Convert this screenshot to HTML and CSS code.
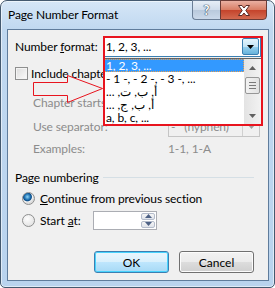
FILE: index.html
```html
<!DOCTYPE html>
<html lang="en">
<head>
    <meta charset="UTF-8">
    <title>Page Number Format</title>
    <link rel="stylesheet" href="styles.css">
</head>
<body>
    <div class="window">
        <div class="titlebar">
            <span class="title">Page Number Format</span>
            <div class="caption-buttons">
                <div class="cap-btn help">?</div>
                <div class="cap-btn close">
                    <svg width="14" height="11" viewBox="0 0 14 11">
                        <path d="M1.5 0.5h3.5l2 2.5 2-2.5h3.5l-3.7 5 3.7 5h-3.5l-2-2.5-2 2.5h-3.5l3.7-5z" fill="#fff" stroke="#5a2a25" stroke-width="1"/>
                    </svg>
                </div>
            </div>
        </div>

        <div class="client">
            <!-- Number format -->
            <div class="row row-format">
                <label class="lbl">Number <u>f</u>ormat:</label>
                <div class="combo combo-format">
                    <span class="combo-text">1, 2, 3, ...</span>
                    <span class="combo-btn pressed">
                        <svg width="7" height="4" viewBox="0 0 7 4"><path d="M0 0h7l-3.5 4z" fill="#000"/></svg>
                    </span>
                </div>
            </div>

            <div class="row row-check">
                <span class="checkbox"></span>
                <span class="check-text">Include chapter number</span>
            </div>

            <!-- Chapter numbering (disabled) -->
            <div class="chapter-grid">
                <span class="dim cut">Chapter starts with style</span>
                <div class="combo combo-off">
                    <span class="combo-text"></span>
                    <span class="combo-btn"><svg width="7" height="4" viewBox="0 0 7 4"><path d="M0 0h7l-3.5 4z" fill="#a0a0a0"/></svg></span>
                </div>
                <span class="dim">Use separator:</span>
                <div class="combo combo-off">
                    <span class="combo-text">-&nbsp;&nbsp;&nbsp;(hyphen)</span>
                    <span class="combo-btn"><svg width="7" height="4" viewBox="0 0 7 4"><path d="M0 0h7l-3.5 4z" fill="#a0a0a0"/></svg></span>
                </div>
                <span class="dim">Examples:</span>
                <span class="dim">1-1, 1-A</span>
            </div>

            <!-- Page numbering -->
            <div class="group-head">
                <span>Page numbering</span>
                <span class="group-line"></span>
            </div>
            <div class="row radio-row">
                <span class="radio checked"></span>
                <span><u>C</u>ontinue from previous section</span>
            </div>
            <div class="row radio-row">
                <span class="radio"></span>
                <span class="start-label">Start <u>a</u>t:</span>
                <div class="spin">
                    <span class="spin-field"></span>
                    <span class="spin-btns">
                        <span class="spin-btn"><svg width="7" height="4" viewBox="0 0 7 4"><path d="M0 4h7l-3.5-4z" fill="#4d6185"/></svg></span>
                        <span class="spin-btn"><svg width="7" height="4" viewBox="0 0 7 4"><path d="M0 0h7l-3.5 4z" fill="#4d6185"/></svg></span>
                    </span>
                </div>
            </div>

            <div class="actions">
                <button class="btn default">OK</button>
                <button class="btn">Cancel</button>
            </div>

            <!-- Open dropdown list -->
            <div class="dropdown-list">
                <div class="items">
                    <div class="item selected">1, 2, 3, ...</div>
                    <div class="item">- 1 -, - 2 -, - 3 -, ...</div>
                    <div class="item"><span dir="rtl">أ, ب, ت, ...</span></div>
                    <div class="item"><span dir="rtl">أ, ب, ج, ...</span></div>
                    <div class="item">a, b, c, ...</div>
                </div>
                <div class="scrollbar">
                    <span class="sb-btn"><svg width="7" height="4" viewBox="0 0 7 4"><path d="M0 4h7l-3.5-4z" fill="#606060"/></svg></span>
                    <span class="sb-thumb"><i></i><i></i><i></i></span>
                    <span class="sb-track"></span>
                    <span class="sb-btn"><svg width="7" height="4" viewBox="0 0 7 4"><path d="M0 0h7l-3.5 4z" fill="#606060"/></svg></span>
                </div>
            </div>

            <!-- Red annotation -->
            <svg class="callout-arrow" width="110" height="80" viewBox="0 0 110 80">
                <polygon points="25.5,52.5 59.5,52.5 59.5,45.5 94.5,58.5 59.5,72.5 59.5,65.5 25.5,65.5" fill="none" stroke="#e8141e" stroke-width="1"/>
            </svg>
            <div class="callout-box"></div>
        </div>
    </div>
</body>
</html>
```

FILE: styles.css
```css
* {
    box-sizing: border-box;
}

body {
    margin: 0;
    width: 275px;
    height: 288px;
    overflow: hidden;
    font-family: Lato, "Noto Sans", sans-serif;
    font-size: 12px;
    letter-spacing: -0.1px;
    color: #000;
    background: #fff;
}

/* Window frame */
.window {
    height: 288px;
    display: flex;
    flex-direction: column;
    padding: 0 5px 6px 6px;
    border: 1px solid #44596f;
    border-radius: 7px 7px 5px 5px;
    background: linear-gradient(#d6e6f7, #c0d8f0 28px, #b9d3ee);
    box-shadow: inset 0 0 0 1px rgba(255, 255, 255, 0.55);
}

.titlebar {
    height: 28px;
    display: flex;
    justify-content: space-between;
    align-items: flex-start;
}

.title {
    margin: 7px 0 0 1px;
    line-height: 14px;
}

.caption-buttons {
    display: flex;
    margin: -1px 2px 0 0;
}

.cap-btn {
    height: 20px;
    display: flex;
    align-items: center;
    justify-content: center;
}

.help {
    width: 28px;
    border: 1px solid #6b7e96;
    border-right: none;
    border-radius: 0 0 0 4px;
    background: linear-gradient(#e6eef7, #cfdbea 50%, #b9c9dc 51%, #cbd9ea);
    color: #fff;
    font-weight: bold;
    font-size: 13px;
    text-shadow: 0 0 1px #33475e, 0 0 1px #33475e, 0 0 1px #33475e;
}

.close {
    width: 47px;
    border: 1px solid #6b3b36;
    border-radius: 0 0 4px 0;
    background: linear-gradient(#eab0a2, #d87c63 50%, #c5432b 51%, #d36a50);
}

/* Client area */
.client {
    flex: 1;
    position: relative;
    padding: 6px 7px 0 7px;
    background: #f0f0f0;
    border: 1px solid #5f7c9c;
}

.row {
    display: flex;
    align-items: center;
}

.row-format {
    height: 21px;
}

.lbl {
    width: 88px;
}

.combo {
    display: flex;
    align-items: stretch;
    height: 21px;
    border: 1px solid #abadb3;
    background: #fff;
}

.combo-format {
    width: 159px;
    border-color: #3c7fb1;
}

.combo-text {
    flex: 1;
    padding-left: 2px;
    display: flex;
    align-items: center;
    white-space: nowrap;
    overflow: hidden;
}

.combo-btn {
    width: 17px;
    display: flex;
    align-items: center;
    justify-content: center;
    border-left: 1px solid #d0d0d0;
}

.combo-btn.pressed {
    margin: 1px;
    border: 1px solid #3c7fb1;
    border-radius: 2px;
    background: linear-gradient(#e5f4fc, #c4e5f6 50%, #98d1ef 51%, #68b3db);
}

.combo-off {
    background: #f0f0f0;
    border-color: #c5c5c5;
    color: #8c8c8c;
}

.row-check {
    height: 20px;
    margin-top: 6px;
}

.checkbox {
    width: 13px;
    height: 13px;
    border: 1px solid #8e8f8f;
    background: linear-gradient(135deg, #dcdcdc, #fbfbfb);
    box-shadow: inset 0 0 0 1px #f4f4f4;
}

/* text hidden behind the open list is clipped at its edge */
.check-text {
    margin-left: 3px;
    width: 72px;
    white-space: nowrap;
    overflow: hidden;
}

/* Chapter numbering */
.chapter-grid {
    display: grid;
    grid-template-columns: 135px 92px;
    grid-template-rows: 21px 21px 16px;
    row-gap: 3px;
    align-items: center;
    margin: 9px 0 0 18px;
}

.dim {
    color: #8c8c8c;
    white-space: nowrap;
}

.dim.cut {
    width: 70px;
    overflow: hidden;
}

/* Page numbering group */
.group-head {
    display: flex;
    align-items: center;
    gap: 4px;
    height: 14px;
    margin: 14px 7px 0 0;
}

.group-line {
    flex: 1;
    height: 1px;
    background: #d5dfe5;
}

.radio-row {
    height: 20px;
    margin-top: 4px;
    padding-left: 7px;
}

.radio-row + .radio-row {
    margin-top: 2px;
}

.radio {
    width: 13px;
    height: 13px;
    margin-right: 5px;
    border-radius: 50%;
    border: 1px solid #8e8f8f;
    background: radial-gradient(circle at 40% 35%, #fdfdfd, #dcdcdc);
}

.radio.checked {
    background: radial-gradient(circle at 40% 35%, #8fd5f7 0, #1c6fb0 3px, #0d4c86 4px, #f6f6f6 5px, #dcdcdc 6px);
}

.start-label {
    width: 53px;
}

.spin {
    width: 64px;
    height: 19px;
    display: flex;
    border: 1px solid #abadb3;
    background: #fff;
}

.spin-field {
    flex: 1;
}

.spin-btns {
    width: 16px;
    display: flex;
    flex-direction: column;
    gap: 1px;
    padding: 1px;
}

.spin-btn {
    flex: 1;
    display: flex;
    align-items: center;
    justify-content: center;
    border: 1px solid #b4bccb;
    border-radius: 2px;
    background: linear-gradient(#f6f6f6, #dfe3ea);
}

/* Dialog buttons */
.actions {
    display: flex;
    justify-content: flex-end;
    gap: 10px;
    margin: 21px 7px 0 0;
}

.btn {
    width: 75px;
    height: 22px;
    padding: 0;
    font-family: inherit;
    font-size: 12px;
    color: #000;
    border: 1px solid #707070;
    border-radius: 3px;
    background: linear-gradient(#f2f2f2, #ebebeb 50%, #dddddd 51%, #cfcfcf);
    box-shadow: inset 0 0 0 1px #fcfcfc;
}

.btn.default {
    border-color: #3c7fb1;
    box-shadow: inset 0 0 0 1px #48d3fd;
    background: linear-gradient(#eaf6fd, #d9f0fc 50%, #bee6fd 51%, #a7d9f5);
}

/* Dropdown list lying over the form */
.dropdown-list {
    position: absolute;
    left: 95px;
    top: 28px;
    width: 159px;
    height: 67px;
    display: flex;
    border: 1px solid #646464;
    background: #fff;
}

.items {
    flex: 1;
}

.item {
    height: 13px;
    line-height: 13px;
    padding-left: 2px;
    white-space: nowrap;
}

.item.selected {
    background: #3399ff;
    color: #fff;
    outline: 1px dotted #e8a050;
    outline-offset: -1px;
}

.scrollbar {
    width: 17px;
    display: flex;
    flex-direction: column;
    background: linear-gradient(90deg, #e3e3e3, #f2f2f2);
}

.sb-btn {
    height: 17px;
    display: flex;
    align-items: center;
    justify-content: center;
}

.sb-thumb {
    height: 17px;
    margin: 1px 1px 0;
    display: flex;
    flex-direction: column;
    justify-content: center;
    align-items: center;
    gap: 2px;
    border: 1px solid #979797;
    border-radius: 2px;
    background: linear-gradient(90deg, #f2f2f2, #e2e2e2);
}

.sb-thumb i {
    width: 7px;
    height: 1px;
    background: #7a7a7a;
}

.sb-track {
    flex: 1;
}

/* Red callout */
.callout-arrow {
    position: absolute;
    left: 0;
    top: 0;
}

.callout-box {
    position: absolute;
    left: 95px;
    top: 6px;
    width: 160px;
    height: 90px;
    border: 2px solid #e8141e;
}
```
